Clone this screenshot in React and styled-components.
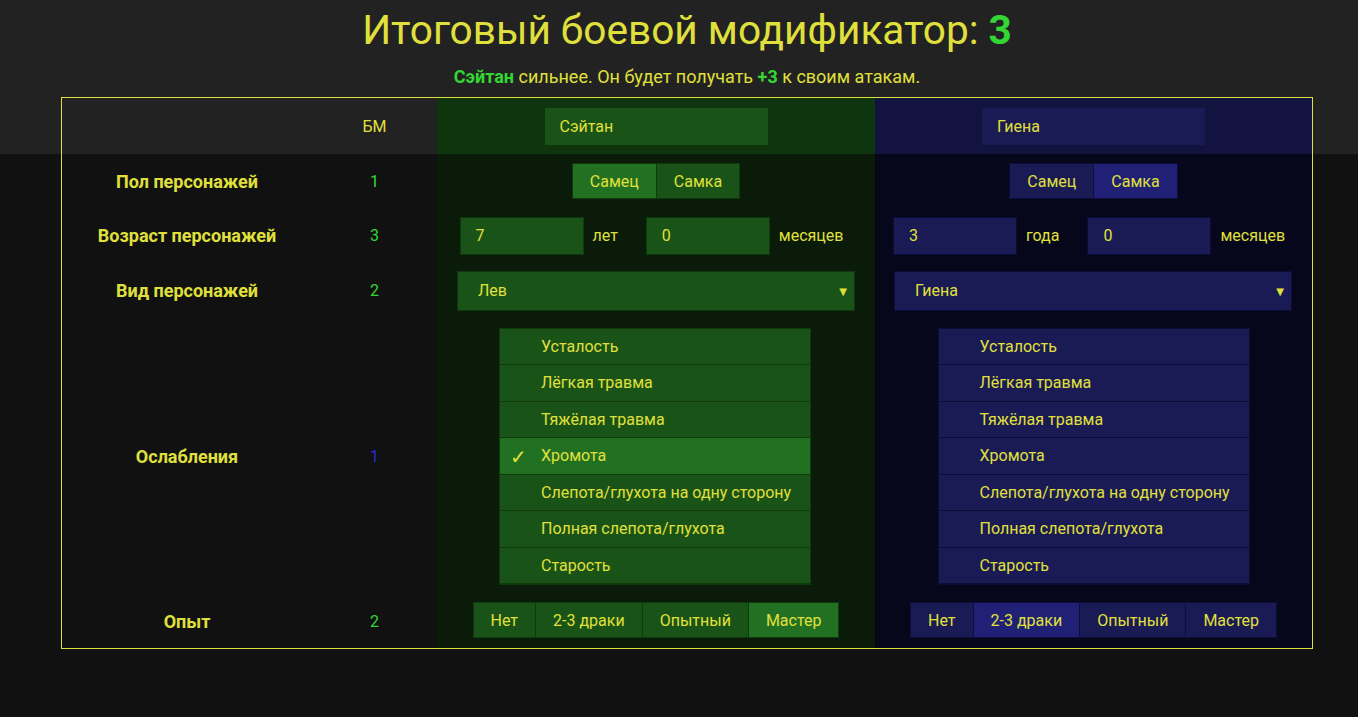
import React, { useState } from 'react'
import styled, { createGlobalStyle, css } from 'styled-components'

const YELLOW = '#e0e03c'
const BRIGHT = '#33d633'

const themes = {
  lion: {
    head: '#0f350f',
    body: '#0a1b0a',
    field: '#1a5317',
    active: '#227022',
    edge: '#0e3a0d',
  },
  hyena: {
    head: '#13133f',
    body: '#07071c',
    field: '#1a1a55',
    active: '#202077',
    edge: '#0d0d3a',
  },
}

const GlobalStyle = createGlobalStyle`
  body {
    margin: 0;
    background: linear-gradient(#222 0, #222 154px, #111 154px, #111 100%);
    font-family: Roboto, 'Liberation Sans', sans-serif;
    color: ${YELLOW};
    min-height: 100vh;
  }
`

const Page = styled.div`
  padding: 0 0 0 16px;
`

const Title = styled.h1`
  margin: 0;
  padding-top: 4px;
  height: 52px;
  font-size: 40.6px;
  font-weight: 400;
  text-align: center;
  line-height: 52px;

  b {
    color: ${BRIGHT};
    font-weight: 700;
  }
`

const Verdict = styled.p`
  margin: 0;
  height: 41px;
  line-height: 42px;
  text-align: center;
  font-size: 18px;

  b {
    color: ${BRIGHT};
  }
`

const Table = styled.div`
  width: 1250px;
  margin: 0 auto;
  border: 1px solid ${YELLOW};
  display: grid;
  grid-template-columns: 250px 125px 438px 437px;
  grid-template-rows: 56px 54px 55px 55px 276px 54px;
`

const Cell = styled.div`
  display: flex;
  align-items: center;
  justify-content: center;
  font-size: 16px;
`

const Label = styled(Cell)`
  font-size: 18px;
  font-weight: 700;
`

const Score = styled(Cell)`
  color: ${p => (p.$blue ? '#2b2bd6' : BRIGHT)};
`

const SideCell = styled(Cell)`
  background: ${p => (p.$head ? p.$t.head : p.$t.body)};
  padding: ${p => p.$pad || '0'};
`

const fieldStyle = css`
  box-sizing: border-box;
  background: ${p => p.$t.field};
  border: 1px solid ${p => p.$t.edge};
  color: ${YELLOW};
  font: 16px Roboto, 'Liberation Sans', sans-serif;
  outline: none;
`

const NameInput = styled.input`
  ${fieldStyle};
  width: 223px;
  height: 37px;
  padding: 0 14px;
  border-color: ${p => p.$t.field};
`

const Segmented = styled.div`
  display: flex;
  border: 1px solid ${p => p.$t.edge};
`

const SegButton = styled.button`
  height: 34px;
  padding: 0 ${p => p.$px || 17}px;
  border: none;
  border-left: 1px solid ${p => p.$t.edge};
  background: ${p => (p.$on ? p.$t.active : p.$t.field)};
  color: ${YELLOW};
  font: 16px Roboto, 'Liberation Sans', sans-serif;
  cursor: pointer;

  &:first-child {
    border-left: none;
  }
`

const AgeRow = styled.div`
  display: flex;
  align-items: center;
  width: 100%;
  justify-content: center;
`

const AgeInput = styled.input`
  ${fieldStyle};
  width: 124px;
  height: 38px;
  padding: 0 15px;
`

const Unit = styled.span`
  padding: 0 ${p => p.$right}px 0 9px;
  font-size: 16px;
`

const SelectBox = styled.div`
  ${fieldStyle};
  position: relative;
  width: 100%;
  height: 40px;
  display: flex;
  align-items: center;
  padding: 0 20px;
  cursor: pointer;
`

const Arrow = styled.span`
  position: absolute;
  right: 7px;
  top: 50%;
  transform: translateY(-50%);
  font-size: 10px;
  font-family: 'DejaVu Sans', sans-serif;
`

const List = styled.ul`
  box-sizing: border-box;
  list-style: none;
  margin: 0;
  padding: 0;
  width: 312px;
  height: 257px;
  overflow: hidden;
  background: ${p => p.$t.field};
  border: 1px solid ${p => p.$t.edge};
`

const Item = styled.li`
  position: relative;
  box-sizing: border-box;
  height: 36.5px;
  display: flex;
  align-items: center;
  padding-left: 41px;
  font-size: 16px;
  border-bottom: 1px solid ${p => p.$t.edge};
  background: ${p => (p.$on ? p.$t.active : 'transparent')};
`

const Check = styled.span`
  position: absolute;
  left: 10px;
  top: 7px;
  font-size: 20px;
  font-weight: 700;
  font-family: 'DejaVu Sans', sans-serif;
`

const weaknesses = [
  'Усталость',
  'Лёгкая травма',
  'Тяжёлая травма',
  'Хромота',
  'Слепота/глухота на одну сторону',
  'Полная слепота/глухота',
  'Старость',
]

const experience = [
  { name: 'Нет', px: 17 },
  { name: '2-3 драки', px: 17 },
  { name: 'Опытный', px: 17 },
  { name: 'Мастер', px: 17 },
]

const fighters = [
  {
    t: themes.lion,
    name: 'Сэйтан',
    sex: 0,
    years: '7',
    yearsUnit: 'лет',
    species: 'Лев',
    weak: [3],
    exp: 3,
  },
  {
    t: themes.hyena,
    name: 'Гиена',
    sex: 1,
    years: '3',
    yearsUnit: 'года',
    species: 'Гиена',
    weak: [],
    exp: 1,
  },
]

const App = () => {
  const [sides, setSides] = useState(fighters)

  const update = (i, patch) =>
    setSides(s => s.map((f, j) => (j === i ? { ...f, ...patch } : f)))

  const toggleWeak = (i, k) => {
    const w = sides[i].weak
    update(i, { weak: w.includes(k) ? w.filter(x => x !== k) : [...w, k] })
  }

  return (
    <>
      <GlobalStyle />
      <Page>
        <Title>
          Итоговый боевой модификатор: <b>3</b>
        </Title>
        <Verdict>
          <b>Сэйтан</b> сильнее. Он будет получать <b>+3</b> к своим атакам.
        </Verdict>

        <Table>
          <Cell />
          <Cell>БМ</Cell>
          {sides.map((f, i) => (
            <SideCell key={i} $t={f.t} $head>
              <NameInput
                $t={f.t}
                value={f.name}
                onChange={e => update(i, { name: e.target.value })}
              />
            </SideCell>
          ))}

          <Label>Пол персонажей</Label>
          <Score>1</Score>
          {sides.map((f, i) => (
            <SideCell key={i} $t={f.t}>
              <Segmented $t={f.t}>
                {['Самец', 'Самка'].map((s, k) => (
                  <SegButton
                    key={s}
                    $t={f.t}
                    $on={f.sex === k}
                    onClick={() => update(i, { sex: k })}
                  >
                    {s}
                  </SegButton>
                ))}
              </Segmented>
            </SideCell>
          ))}

          <Label>Возраст персонажей</Label>
          <Score>3</Score>
          {sides.map((f, i) => (
            <SideCell key={i} $t={f.t} $pad="0 9px 0 0">
              <AgeRow>
                <AgeInput
                  $t={f.t}
                  value={f.years}
                  onChange={e => update(i, { years: e.target.value })}
                />
                <Unit $right={28}>{f.yearsUnit}</Unit>
                <AgeInput $t={f.t} defaultValue="0" />
                <Unit $right={0}>месяцев</Unit>
              </AgeRow>
            </SideCell>
          ))}

          <Label>Вид персонажей</Label>
          <Score>2</Score>
          {sides.map((f, i) => (
            <SideCell key={i} $t={f.t} $pad={i === 0 ? '0 20px' : '0 20px 0 19px'}>
              <SelectBox $t={f.t}>
                {f.species}
                <Arrow>▼</Arrow>
              </SelectBox>
            </SideCell>
          ))}

          <Label>Ослабления</Label>
          <Score $blue>1</Score>
          {sides.map((f, i) => (
            <SideCell key={i} $t={f.t} $pad={i === 0 ? '0 2px 0 0' : '0 0 0 0'}>
              <List $t={f.t}>
                {weaknesses.map((w, k) => (
                  <Item
                    key={w}
                    $t={f.t}
                    $on={f.weak.includes(k)}
                    onClick={() => toggleWeak(i, k)}
                  >
                    {f.weak.includes(k) && <Check>✓</Check>}
                    {w}
                  </Item>
                ))}
              </List>
            </SideCell>
          ))}

          <Label>Опыт</Label>
          <Score>2</Score>
          {sides.map((f, i) => (
            <SideCell key={i} $t={f.t} $pad="0 0 2px 0">
              <Segmented $t={f.t}>
                {experience.map((x, k) => (
                  <SegButton
                    key={x.name}
                    $t={f.t}
                    $px={x.px}
                    $on={f.exp === k}
                    onClick={() => update(i, { exp: k })}
                  >
                    {x.name}
                  </SegButton>
                ))}
              </Segmented>
            </SideCell>
          ))}
        </Table>
      </Page>
    </>
  )
}

export default App
